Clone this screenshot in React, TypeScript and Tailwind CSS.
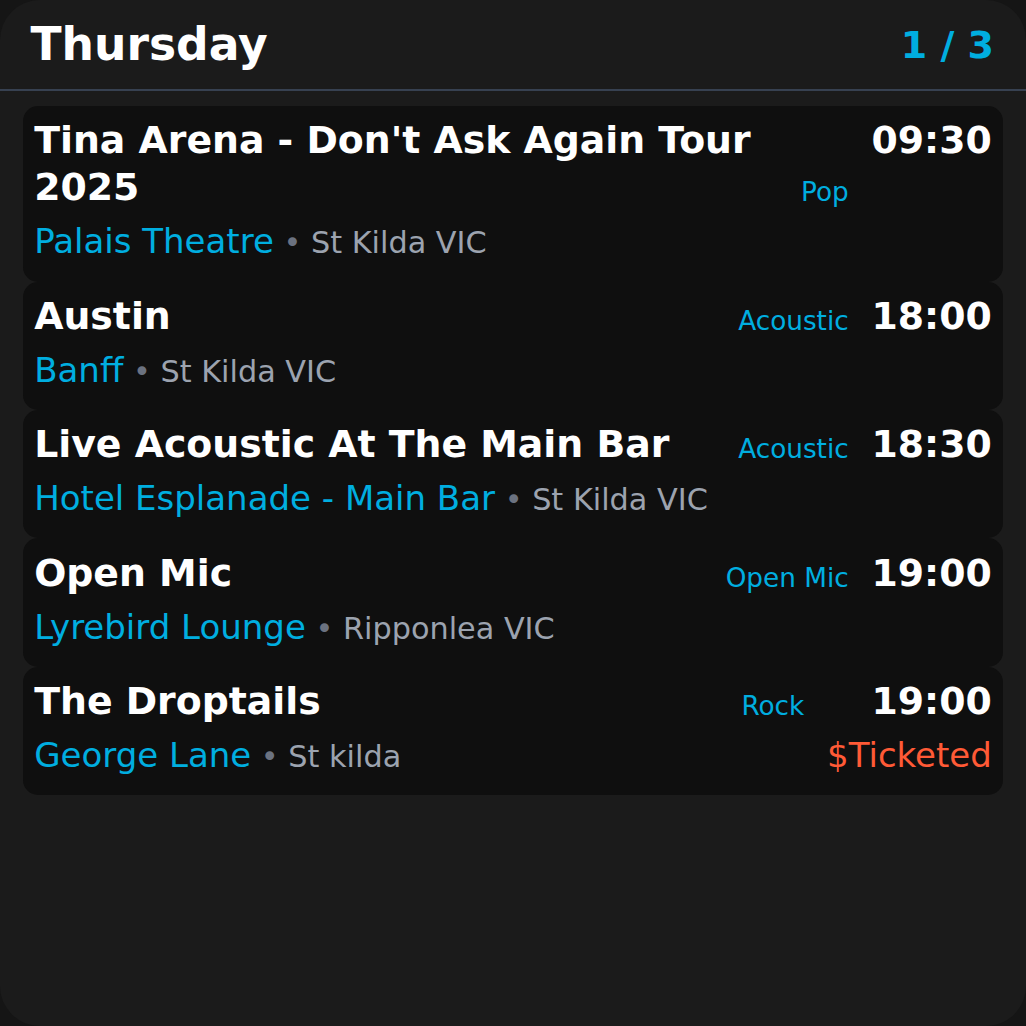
import React from "react";

type Gig = {
  title: string;
  genre: string;
  time: string;
  venue: string;
  place: string;
  ticketed?: boolean;
};

const gigs: Gig[] = [
  { title: "Tina Arena - Don't Ask Again Tour 2025", genre: "Pop", time: "09:30", venue: "Palais Theatre", place: "St Kilda VIC" },
  { title: "Austin", genre: "Acoustic", time: "18:00", venue: "Banff", place: "St Kilda VIC" },
  { title: "Live Acoustic At The Main Bar", genre: "Acoustic", time: "18:30", venue: "Hotel Esplanade - Main Bar", place: "St Kilda VIC" },
  { title: "Open Mic", genre: "Open Mic", time: "19:00", venue: "Lyrebird Lounge", place: "Ripponlea VIC" },
  { title: "The Droptails", genre: "Rock", time: "19:00", venue: "George Lane", place: "St kilda", ticketed: true },
];

function Card({ gig }: { gig: Gig }) {
  return (
    <div className="flex items-start gap-[22.8px] rounded-[15px] bg-[#0f0f0f] p-[11.4px]">
      <div className="min-w-0 flex-1">
        <div className="flex items-end gap-[15px]">
          <h2 className="min-w-0 flex-1 text-[37.8px] font-bold leading-[47.3px] text-white">{gig.title}</h2>
          <span className="shrink-0 text-[26.3px] leading-[37.5px] text-[#00aee0]">{gig.genre}</span>
        </div>
        <p className="mt-[3.6px] text-[34px] leading-[52.8px]">
          <span className="text-[#00aee0]">{gig.venue}</span>
          <span className="text-[30.3px] text-[#6b7280]"> • </span>
          <span className="text-[30.3px] text-[#9ca3af]">{gig.place}</span>
        </p>
      </div>
      <div className="flex shrink-0 flex-col items-end">
        <span className="text-[37.8px] font-bold leading-[47.3px] text-white">{gig.time}</span>
        {gig.ticketed && (
          <span className="mt-[3.6px] text-[34px] leading-[52.8px] text-[#ff5a36]">$Ticketed</span>
        )}
      </div>
    </div>
  );
}

export default function App() {
  return (
    <div className="min-h-screen bg-[#151515]" style={{ fontFamily: '"DejaVu Sans", sans-serif' }}>
      <div className="h-[1026px] w-[1026px] overflow-hidden rounded-[40px] bg-[#1b1b1b]">
        <header className="flex items-center justify-between border-b-2 border-[#374151] pb-[13.3px] pl-[30.4px] pr-[32px] pt-[15.2px]">
          <h1 className="text-[45.6px] font-bold leading-[60.8px] text-white">Thursday</h1>
          <span className="text-[38px] font-bold leading-[53.2px] text-[#00aee0]">1 / 3</span>
        </header>
        <div className="flex flex-col px-[22.8px] pt-[14.5px]">
          {gigs.map((g, i) => (
            <Card key={i} gig={g} />
          ))}
        </div>
      </div>
    </div>
  );
}
